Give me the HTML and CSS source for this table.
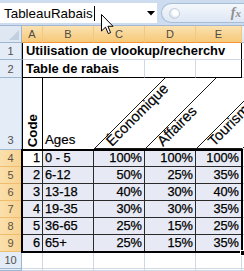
FILE: index.html
```html
<!DOCTYPE html>
<html lang="fr">
<head>
<meta charset="utf-8">
<title>TableauRabais</title>
<link rel="stylesheet" href="styles.css">
</head>
<body>
<div class="fbar">
  <div class="namebox">
    <span class="name">TableauRabais</span><span class="caret"></span>
    <svg class="dd" width="8" height="5" viewBox="0 0 8 5"><path d="M0 0H8L4 4.5Z" fill="#000"/></svg>
  </div>
  <div class="pill"><span class="knob"></span><span class="fx">f<span class="x">x</span></span></div>
</div>
<div class="sheet">
  <div class="corner"><span class="tri"></span></div>
  <div class="ch on">A</div>
  <div class="ch on">B</div>
  <div class="ch on">C</div>
  <div class="ch on">D</div>
  <div class="ch on">E</div>
  <div class="ch"></div>

  <div class="rh">1</div>
  <div class="c la ra s5 title">Utilisation de vlookup/recherchv</div>
  <div class="c"></div>

  <div class="rh">2</div>
  <div class="c la s3 bb title">Table de rabais</div>
  <div class="c bb"></div>
  <div class="c bb ra"></div>
  <div class="c"></div>

  <div class="rh tall">3</div>
  <div class="c la ra bb code"><span>Code</span></div>
  <div class="c bb nr ages">Ages</div>
  <div class="c nr nb rot diag">
    <svg class="diagsvg" width="150" height="72" viewBox="0 0 150 72">
      <g stroke="#1a1a1a" stroke-width="1" fill="none">
        <path d="M0.5 70.5L71 0"/>
        <path d="M51.5 70.5L122 0"/>
        <path d="M102.5 70.5L173 0"/>
        <path d="M148.5 70.5L219 0"/>
        <path d="M0 70.5H51M51 70.5H102M102 70.5H148"/>
      </g>
    </svg>
    <span>Économique</span>
  </div>
  <div class="c nr nb rot"><span>Affaires</span></div>
  <div class="c nr nb rot"><span>Tourisme</span></div>
  <div class="c"></div>

  <div class="rh on">4</div>
  <div class="c la t num act">1<div class="selbox"><span class="handle"></span></div></div>
  <div class="c t tb">0 - 5</div>
  <div class="c t num">100%</div>
  <div class="c t num">100%</div>
  <div class="c t num">100%</div>
  <div class="c"></div>

  <div class="rh on">5</div>
  <div class="c la t num">2</div>
  <div class="c t tb">6-12</div>
  <div class="c t num">50%</div>
  <div class="c t num">25%</div>
  <div class="c t num">35%</div>
  <div class="c"></div>

  <div class="rh on">6</div>
  <div class="c la t num">3</div>
  <div class="c t tb">13-18</div>
  <div class="c t num">40%</div>
  <div class="c t num">30%</div>
  <div class="c t num">40%</div>
  <div class="c"></div>

  <div class="rh on">7</div>
  <div class="c la t num">4</div>
  <div class="c t tb">19-35</div>
  <div class="c t num">30%</div>
  <div class="c t num">30%</div>
  <div class="c t num">35%</div>
  <div class="c"></div>

  <div class="rh on">8</div>
  <div class="c la t num">5</div>
  <div class="c t tb">36-65</div>
  <div class="c t num">25%</div>
  <div class="c t num">15%</div>
  <div class="c t num">25%</div>
  <div class="c"></div>

  <div class="rh on">9</div>
  <div class="c la t num">6</div>
  <div class="c t tb">65+</div>
  <div class="c t num">25%</div>
  <div class="c t num">15%</div>
  <div class="c t num">35%</div>
  <div class="c"></div>

  <div class="rh">10</div>
  <div class="c"></div><div class="c"></div><div class="c"></div><div class="c"></div><div class="c"></div><div class="c"></div>

  <div class="rh"></div>
  <div class="c"></div><div class="c"></div><div class="c"></div><div class="c"></div><div class="c"></div><div class="c"></div>
</div>
<svg class="pointer" width="13" height="21" viewBox="0 0 13 21"><path d="M0.5 0.5V17L4.5 13.2L7.3 19.6L9.6 18.6L6.9 12.3H12Z" fill="#fff" stroke="#000" stroke-width="1" stroke-linejoin="miter"/></svg>
</body>
</html>
```

FILE: styles.css
```css
* { box-sizing: border-box; margin: 0; padding: 0; }
html, body { width: 244px; height: 271px; overflow: hidden; background: #fff; }
body { position: relative; font-family: "Liberation Sans", Arial, sans-serif; color: #000; }

/* formula bar */
.fbar {
  height: 26px;
  display: flex;
  padding: 3px 0 2px 0;
  background: #cddcef;
  border-bottom: 1px solid #a3b7d0;
}
.namebox {
  width: 157px;
  background: #fff;
  display: flex;
  align-items: center;
  padding-left: 4px;
}
.name { font-size: 13.4px; line-height: 15px; letter-spacing: 0; }
.caret { width: 1px; height: 15px; background: #000; margin-left: 1px; }
.dd { margin-left: auto; margin-right: 2px; margin-top: 1px; }
.pill {
  flex: 1;
  margin-left: 4px;
  display: flex;
  align-items: center;
  border: 1px solid #a7bcd6;
  border-right: none;
  border-radius: 11px 0 0 11px;
  background: linear-gradient(#f5f8fc, #dde7f4);
  padding-left: 7px;
}
.knob {
  width: 11px; height: 11px;
  border-radius: 50%;
  background: radial-gradient(circle at 60% 40%, #ffffff 0 35%, #d9e2ee 70%, #b7c6d8 100%);
  border: 1px solid #c3cfdd;
}
.fx {
  margin-left: auto;
  margin-right: 3px;
  font-family: "Liberation Serif", "DejaVu Serif", serif;
  font-style: italic;
  font-weight: bold;
  color: #8e8e8e;
  font-size: 14px;
  line-height: 14px;
}
.fx .x { font-size: 11px; }

/* sheet grid */
.sheet {
  display: grid;
  grid-template-columns: 22px 21px 51px 51px 51px 46px 1fr;
  grid-template-rows: 17px 17px 18px 72px repeat(7, 17px) 1fr;
  width: 244px;
  height: 245px;
  overflow: hidden;
}
.corner {
  background: #dfe7f2;
  border-right: 1px solid #9eb6ce;
  border-bottom: 1px solid #9eb6ce;
  display: flex;
  align-items: flex-end;
  justify-content: flex-end;
  padding: 0 2px 2px 0;
}
.tri {
  width: 10px; height: 10px;
  background: #c2cfde;
  clip-path: polygon(100% 0, 100% 100%, 0 100%);
}
.ch {
  background: linear-gradient(#f1f5fb, #dbe5f2);
  border-right: 1px solid #b6c8dc;
  border-bottom: 1px solid #9eb6ce;
  font-size: 11px;
  color: #4c4c4c;
  display: flex;
  align-items: center;
  justify-content: center;
}
.ch.on {
  background: linear-gradient(#fbe2b2, #f6c978);
  border-right: 1px solid #f1c983;
  border-bottom: 1px solid #f29536;
  color: #4e4a44;
}
.rh {
  background: #e4ecf7;
  border-right: 1px solid #9eb6ce;
  border-bottom: 1px solid #9eb6ce;
  font-size: 11px;
  color: #505050;
  display: flex;
  align-items: center;
  justify-content: center;
}
.rh.tall { align-items: flex-end; padding-bottom: 3px; }
.rh.on {
  background: linear-gradient(to right, #fbdfab, #f8d392);
  border-bottom: 1px solid #f0bd6e;
  border-right: 1px solid #f29536;
  color: #5a5246;
}

.c {
  border-right: 1px solid #d0d7e5;
  border-bottom: 1px solid #d0d7e5;
  display: flex;
  align-items: flex-end;
  white-space: nowrap;
  min-width: 0;
  font-size: 13.3px;
  line-height: 15px;
  padding: 0 2px 1px 2px;
}
.s5 { grid-column: span 5; }
.s3 { grid-column: span 3; }
.la { border-left: 1px solid #000; }
.ra { border-right: 1px solid #000; }
.bb { border-bottom: 1px solid #000; }
.nr { border-right: none; }
.nb { border-bottom: none; }
.title { font-weight: bold; font-size: 12.9px; padding-left: 3px; }

.code { justify-content: center; padding-bottom: 2px; }
.code span {
  writing-mode: vertical-rl;
  transform: rotate(180deg);
  font-weight: bold;
  font-size: 13.3px;
  line-height: 14px;
}
.ages { padding-left: 2px; padding-bottom: 2px; -webkit-text-stroke: 0.2px #000; }

.rot { position: relative; overflow: visible; padding: 0; }
.rot span {
  display: block;
  font-size: 14.6px;
  line-height: 15px;
  transform-origin: 0 100%;
  transform: rotate(-45deg);
  margin-left: 20px;
  margin-bottom: 1px;
  -webkit-text-stroke: 0.2px #000;
}
.diagsvg { position: absolute; left: 0; top: 0; overflow: visible; }

.t {
  background: #e7eaf4;
  border-right: 1px solid #2a2a2a;
  border-bottom: 1px solid #2a2a2a;
  font-size: 12.8px;
  -webkit-text-stroke: 0.25px #000;
}
.t.act { background: #fff; }
.num { justify-content: flex-end; padding-right: 2px; }
.tb { padding-left: 2px; }

.act { position: relative; }
.selbox {
  position: absolute;
  left: -1px;
  top: 0;
  width: 220px;
  height: 102px;
  outline: 2px solid #000;
  outline-offset: -1px;
  pointer-events: none;
}
.handle {
  position: absolute;
  right: -4px;
  bottom: -4px;
  width: 6px;
  height: 6px;
  background: #000;
  border: 1px solid #fff;
}

.pointer { position: absolute; left: 101px; top: 14px; }
```
